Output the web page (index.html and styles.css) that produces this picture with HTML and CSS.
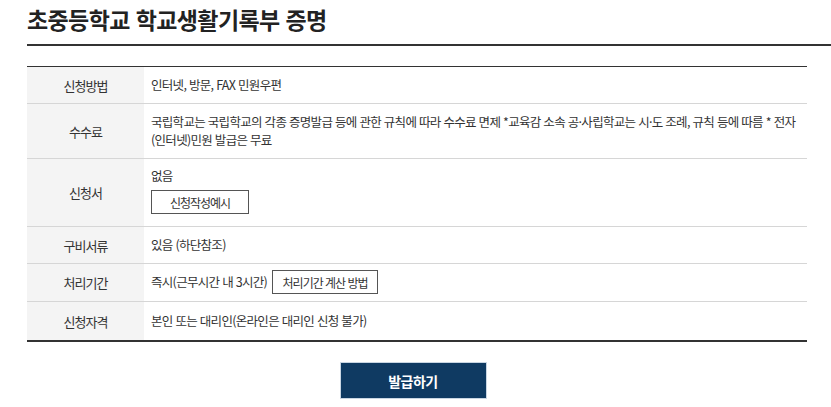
FILE: index.html
```html
<!DOCTYPE html>
<html lang="ko">
<head>
<meta charset="utf-8">
<title>초중등학교 학교생활기록부 증명</title>
<link rel="stylesheet" href="styles.css">
</head>
<body>
<div class="page">
  <h2 class="title">초중등학교 학교생활기록부 증명</h2>
  <div class="info">
    <div class="row">
      <div class="label">신청방법</div>
      <div class="value">인터넷, 방문, FAX 민원우편</div>
    </div>
    <div class="row">
      <div class="label">수수료</div>
      <div class="value">국립학교는 국립학교의 각종 증명발급 등에 관한 규칙에 따라 수수료 면제 *교육감 소속 공·사립학교는 시·도 조례, 규칙 등에 따름 * 전자 (인터넷)민원 발급은 무료</div>
    </div>
    <div class="row">
      <div class="label">신청서</div>
      <div class="value stack">
        <span>없음</span>
        <button class="btn-line btn-sample" type="button">신청작성예시</button>
      </div>
    </div>
    <div class="row">
      <div class="label">구비서류</div>
      <div class="value">있음 (하단참조)</div>
    </div>
    <div class="row">
      <div class="label">처리기간</div>
      <div class="value inline">
        <span>즉시(근무시간 내 3시간)</span>
        <button class="btn-line btn-calc" type="button">처리기간 계산 방법</button>
      </div>
    </div>
    <div class="row">
      <div class="label">신청자격</div>
      <div class="value last">본인 또는 대리인(온라인은 대리인 신청 불가)</div>
    </div>
  </div>
  <div class="actions">
    <button class="btn-issue" type="button">발급하기</button>
  </div>
</div>
</body>
</html>
```

FILE: styles.css
```css
* { box-sizing: border-box; }
html, body { margin: 0; padding: 0; background: #fff; }
body {
  font-family: "Noto Sans CJK KR", "Noto Sans", sans-serif;
  color: #333;
  overflow: hidden;
}
.page {
  padding-left: 27px;
}
.title {
  margin: 0;
  padding-top: 4px;
  height: 46px;
  font-size: 23px;
  line-height: 30px;
  font-weight: 700;
  color: #222;
  letter-spacing: -0.6px;
  border-bottom: 2px solid #333;
}
.info {
  width: 780px;
  margin-top: 20px;
  border-top: 1px solid #333;
  border-bottom: 2px solid #333;
}
.row {
  display: grid;
  grid-template-columns: 117px 1fr;
  border-top: 1px solid #d6d6d6;
}
.row:first-child { border-top: 0; }
.label {
  background: #f4f4f4;
  display: flex;
  align-items: center;
  justify-content: center;
  font-size: 13px;
  letter-spacing: -1px;
  color: #333;
}
.value {
  padding: 9px 7px 9px 7px;
  font-size: 12.5px;
  line-height: 18px;
  letter-spacing: -0.7px;
  word-break: keep-all;
  color: #333;
}
.value.last {
  padding-top: 10px;
  padding-bottom: 10px;
}
.stack {
  display: flex;
  flex-direction: column;
  align-items: flex-start;
  gap: 5px;
  padding-top: 8px;
  padding-bottom: 12px;
}
.inline {
  display: flex;
  align-items: center;
  gap: 5px;
  padding-top: 6px;
  padding-bottom: 7px;
}
.btn-line {
  font-family: inherit;
  height: 24px;
  padding: 0;
  border: 1px solid #555;
  background: #fff;
  color: #333;
  font-size: 12px;
  letter-spacing: -1px;
  cursor: pointer;
}
.btn-sample { width: 98px; }
.btn-calc { width: 106px; }
.actions {
  width: 780px;
  display: flex;
  justify-content: center;
  padding-top: 20px;
}
.btn-issue {
  font-family: inherit;
  width: 147px;
  height: 37px;
  margin-left: -8px;
  background: #0f3a62;
  border: 1px solid #c9d6e3;
  color: #fff;
  font-size: 14px;
  font-weight: 700;
  letter-spacing: -0.5px;
  cursor: pointer;
}
```
